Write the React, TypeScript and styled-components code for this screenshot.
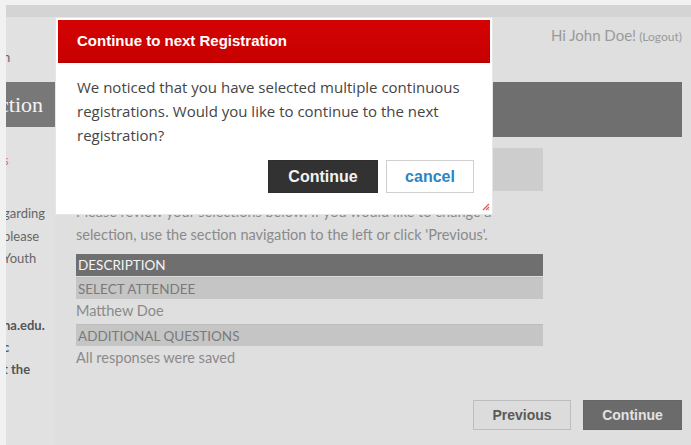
import styled, { createGlobalStyle } from 'styled-components'

const GlobalStyle = createGlobalStyle`
  html, body {
    margin: 0;
    padding: 0;
    background: #f1f1f1;
  }
  #root {
    width: 691px;
    height: 445px;
    overflow: hidden;
  }
`

const Frame = styled.div`
  position: relative;
  width: 685px;
  height: 440px;
  margin: 5px 0 0 6px;
  background: #dfdfdf;
  font-family: Lato, 'Open Sans', sans-serif;
  overflow: hidden;
`

const TopStrip = styled.div`
  height: 12px;
  background: #d4d4d4;
`

const Layout = styled.div`
  display: flex;
  height: 428px;
`

const Sidebar = styled.aside`
  width: 49px;
  flex: none;
  overflow: hidden;
  background: #e1e1e1;
`

const SideLine = styled.div<{ $top?: number; $bold?: boolean; $pink?: boolean }>`
  margin-top: ${({ $top }) => $top ?? 0}px;
  margin-left: -3px;
  height: 22px;
  line-height: 22px;
  font-size: 13px;
  white-space: nowrap;
  font-weight: ${({ $bold }) => ($bold ? 700 : 400)};
  color: ${({ $pink, $bold }) => ($pink ? '#d9708a' : $bold ? '#555' : '#666')};
`

const SideTitle = styled.div`
  margin-top: 14px;
  height: 45px;
  background: #787878;
  color: #f2f2f2;
  font-family: 'Liberation Serif', serif;
  font-size: 22px;
  line-height: 45px;
  white-space: nowrap;
  text-indent: -7px;
`

const Main = styled.main`
  flex: 1;
  margin-left: 7px;
  padding-right: 9px;
  display: flex;
  flex-direction: column;
`

const UserBar = styled.div`
  height: 65px;
  display: flex;
  justify-content: flex-end;
  align-items: baseline;
  gap: 3px;
  padding-top: 9px;
  box-sizing: border-box;
  color: #9a9a9a;
  font-size: 15px;
`

const Small = styled.span`
  font-size: 12px;
`

const Banner = styled.div`
  height: 55px;
  background: #6f6f6f;
`

const Content = styled.div`
  width: 467px;
  margin-left: 14px;
  display: flex;
  flex-direction: column;
`

const StepBox = styled.div`
  margin-top: 11px;
  height: 43px;
  background: #cdcdcd;
`

const Intro = styled.p`
  margin: 9px 0 0;
  font-size: 14.5px;
  line-height: 23px;
  white-space: nowrap;
  color: #8a8a8a;
`

const Table = styled.div`
  margin-top: 8px;
  display: flex;
  flex-direction: column;
`

const Row = styled.div<{ $kind: 'head' | 'section' | 'value' }>`
  height: ${({ $kind }) => ($kind === 'value' ? 23 : 22)}px;
  margin-top: ${({ $kind }) => ($kind === 'head' ? 0 : 1)}px;
  line-height: 22px;
  padding-left: ${({ $kind }) => ($kind === 'value' ? 0 : 2)}px;
  font-size: ${({ $kind }) => ($kind === 'value' ? 14.5 : 13.5)}px;
  background: ${({ $kind }) =>
    $kind === 'head' ? '#6f6f6f' : $kind === 'section' ? '#c5c5c5' : 'transparent'};
  color: ${({ $kind }) =>
    $kind === 'head' ? '#f4f4f4' : $kind === 'section' ? '#7a7a7a' : '#8a8a8a'};
  border-top: ${({ $kind }) => ($kind === 'section' ? '1px solid #bdbdbd' : 'none')};
  box-sizing: border-box;
`

const Footer = styled.div`
  margin-top: auto;
  margin-bottom: 15px;
  display: flex;
  justify-content: flex-end;
  gap: 12px;
`

const PageButton = styled.button<{ $primary?: boolean }>`
  width: ${({ $primary }) => ($primary ? 99 : 98)}px;
  height: 30px;
  border: 1px solid ${({ $primary }) => ($primary ? '#666' : '#bdbdbd')};
  background: ${({ $primary }) => ($primary ? '#6b6b6b' : '#dcdcdc')};
  color: ${({ $primary }) => ($primary ? '#e2e2e2' : '#5a5a5a')};
  font-family: 'Liberation Sans', Arial, sans-serif;
  font-weight: 700;
  font-size: 14px;
  padding: 0;
`

const Dialog = styled.div`
  position: absolute;
  left: 49px;
  top: 12px;
  width: 438px;
  height: 198px;
  box-sizing: border-box;
  background: #fff;
  border: 1px solid #e6e6e6;
  padding: 2px;
  display: flex;
  flex-direction: column;
`

const DialogTitle = styled.div`
  height: 43px;
  background: linear-gradient(#d40303, #c70000);
  border-bottom: 1px solid #b20000;
  box-sizing: border-box;
  color: #fff;
  font-family: 'Liberation Sans', Arial, sans-serif;
  font-weight: 700;
  font-size: 15px;
  line-height: 42px;
  padding-left: 19px;
`

const DialogText = styled.p`
  margin: 12px 0 0 19px;
  font-family: 'Open Sans', sans-serif;
  font-size: 15px;
  line-height: 24px;
  color: #454545;
`

const DialogActions = styled.div`
  display: flex;
  justify-content: flex-end;
  gap: 8px;
  margin-top: 13px;
  padding-right: 16px;
`

const DialogButton = styled.button<{ $primary?: boolean }>`
  width: ${({ $primary }) => ($primary ? 110 : 88)}px;
  height: 33px;
  padding: 0;
  border: 1px solid ${({ $primary }) => ($primary ? '#2e2e2e' : '#cfcfcf')};
  background: ${({ $primary }) => ($primary ? '#323232' : '#fff')};
  color: ${({ $primary }) => ($primary ? '#f2f2f2' : '#2a86c4')};
  font-family: 'Liberation Sans', Arial, sans-serif;
  font-weight: 700;
  font-size: 16px;
`

const Grip = styled.svg`
  position: absolute;
  right: 2px;
  bottom: 3px;
`

export default function App() {
  return (
    <>
      <GlobalStyle />
      <Frame>
        <TopStrip />
        <Layout>
          <Sidebar>
            <SideLine $top={29}>n</SideLine>
            <SideTitle>ction</SideTitle>
            <SideLine $top={22} $pink>
              s
            </SideLine>
            <SideLine $top={31}>garding</SideLine>
            <SideLine $top={1}>please</SideLine>
            <SideLine $top={0}>Youth</SideLine>
            <SideLine $top={45} $bold>
              na.edu.
            </SideLine>
            <SideLine $bold>c</SideLine>
            <SideLine $bold>t the</SideLine>
          </Sidebar>
          <Main>
            <UserBar>
              Hi John Doe! <Small>(Logout)</Small>
            </UserBar>
            <Banner />
            <Content>
              <StepBox />
              <Intro>
                Please review your selections below. If you would like to change a
                <br />
                selection, use the section navigation to the left or click 'Previous'.
              </Intro>
              <Table>
                <Row $kind="head">DESCRIPTION</Row>
                <Row $kind="section">SELECT ATTENDEE</Row>
                <Row $kind="value">Matthew Doe</Row>
                <Row $kind="section">ADDITIONAL QUESTIONS</Row>
                <Row $kind="value">All responses were saved</Row>
              </Table>
            </Content>
            <Footer>
              <PageButton>Previous</PageButton>
              <PageButton $primary>Continue</PageButton>
            </Footer>
          </Main>
        </Layout>
        <Dialog>
          <DialogTitle>Continue to next Registration</DialogTitle>
          <DialogText>
            We noticed that you have selected multiple continuous registrations.
            Would you like to continue to the next registration?
          </DialogText>
          <DialogActions>
            <DialogButton $primary>Continue</DialogButton>
            <DialogButton>cancel</DialogButton>
          </DialogActions>
          <Grip width="8" height="8" viewBox="0 0 8 8">
            <path d="M7 1 L1 7 M7 4 L4 7 M7 6.5 L6.5 7" stroke="#e05a5a" strokeWidth="1.2" />
          </Grip>
        </Dialog>
      </Frame>
    </>
  )
}
